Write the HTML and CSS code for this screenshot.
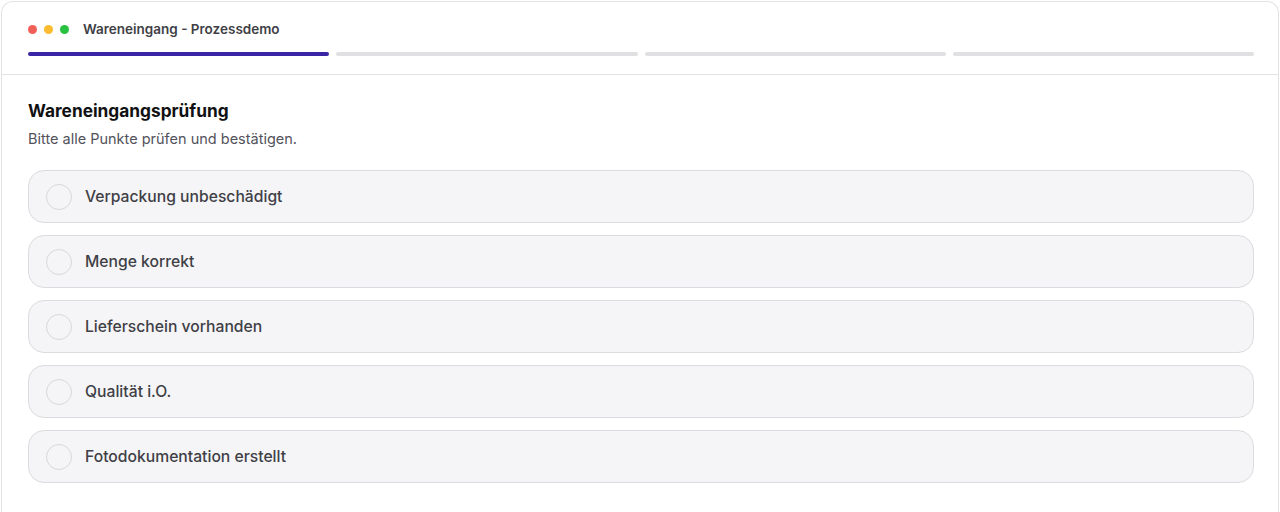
FILE: index.html
```html
<!DOCTYPE html>
<html lang="de">
<head>
<meta charset="utf-8">
<title>Wareneingang - Prozessdemo</title>
<link rel="stylesheet" href="styles.css">
</head>
<body>
<div class="card">
  <header class="head">
    <div class="titlebar">
      <span class="dot red"></span>
      <span class="dot yellow"></span>
      <span class="dot green"></span>
      <span class="apptitle">Wareneingang - Prozessdemo</span>
    </div>
    <div class="steps">
      <span class="step active"></span>
      <span class="step"></span>
      <span class="step"></span>
      <span class="step"></span>
    </div>
  </header>
  <main class="body">
    <h1 class="title">Wareneingangsprüfung</h1>
    <p class="sub">Bitte alle Punkte prüfen und bestätigen.</p>
    <ul class="list">
      <li class="item"><span class="check"></span><span class="label">Verpackung unbeschädigt</span></li>
      <li class="item"><span class="check"></span><span class="label">Menge korrekt</span></li>
      <li class="item"><span class="check"></span><span class="label">Lieferschein vorhanden</span></li>
      <li class="item"><span class="check"></span><span class="label">Qualität i.O.</span></li>
      <li class="item"><span class="check"></span><span class="label">Fotodokumentation erstellt</span></li>
    </ul>
  </main>
</div>
</body>
</html>
```
FILE: styles.css
```css
* { box-sizing: border-box; }
html, body { margin: 0; padding: 0; background: #ffffff; }
body {
  font-family: Inter, "Noto Sans", "Liberation Sans", sans-serif;
  color: #18181b;
  overflow: hidden;
}
.card {
  margin: 1px 1px 0 1px;
  border: 1px solid #e2e2e4;
  border-bottom: none;
  border-radius: 12px 12px 0 0;
  min-height: 520px;
  background: #fff;
}
.head {
  padding: 18px 24px 18px 26px;
  border-bottom: 1px solid #e2e2e4;
}
.titlebar {
  display: flex;
  align-items: center;
  height: 18px;
}
.dot {
  width: 9px;
  height: 9px;
  border-radius: 50%;
  margin-right: 7px;
}
.red { background: #f25f58; }
.yellow { background: #fbbc2f; }
.green { background: #29c140; }
.apptitle {
  margin-left: 7px;
  font-size: 13.5px;
  font-weight: 600;
  color: #3f3f46;
}
.steps {
  display: flex;
  gap: 7px;
  margin-top: 14px;
}
.step {
  flex: 1;
  height: 4px;
  border-radius: 2px;
  background: #e0e0e2;
}
.step.active { background: #3a25a6; }
.body {
  padding: 24px 24px 0 26px;
}
.title {
  margin: 0;
  font-size: 17.3px;
  line-height: 24px;
  font-weight: 700;
  color: #111113;
}
.sub {
  margin: 6px 0 0 0;
  font-size: 14.5px;
  line-height: 20px;
  color: #52525b;
}
.list {
  list-style: none;
  margin: 21px 0 0 0;
  padding: 0;
  display: flex;
  flex-direction: column;
  gap: 12px;
}
.item {
  display: flex;
  align-items: center;
  height: 53px;
  padding-left: 17px;
  border: 1px solid #dcdce0;
  border-radius: 16px;
  background: #f5f5f7;
}
.check {
  width: 26px;
  height: 26px;
  border-radius: 50%;
  border: 1px solid #d8d8dc;
  background: #f5f5f7;
  flex: none;
}
.label {
  margin-left: 13px;
  font-size: 15.7px;
  font-weight: 500;
  color: #3f3f46;
}
```
